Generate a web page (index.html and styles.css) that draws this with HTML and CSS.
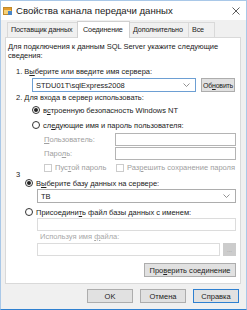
FILE: index.html
```html
<!DOCTYPE html>
<html lang="ru">
    <head>
        <meta charset="UTF-8" />
        <title>Свойства канала передачи данных</title>
        <link rel="stylesheet" href="styles.css">
    </head>
    <body>
        <div class="window">
            <div class="titlebar">
                <svg class="app_icon" width="10" height="10" viewBox="0 0 10 10">
                    <rect x="0.5" y="1.5" width="8" height="7" fill="#f6d27a" stroke="#c08a2a" />
                    <rect x="1" y="2" width="7" height="2" fill="#e49b2c" />
                    <rect x="5" y="5" width="4" height="4" fill="#4a86c8" />
                </svg>
                <span class="title">Свойства канала передачи данных</span>
                <svg class="close" width="8" height="8" viewBox="0 0 8 8">
                    <path d="M0.5 0.5 L7.5 7.5 M7.5 0.5 L0.5 7.5" stroke="#333" stroke-width="0.8" />
                </svg>
            </div>

            <div class="tabs">
                <div class="tab tab_provider">Поставщик данных</div>
                <div class="tab tab_active">Соединение</div>
                <div class="tab tab_extra">Дополнительно</div>
                <div class="tab tab_all">Все</div>
            </div>

            <div class="panel">
                <p class="intro">Для подключения к данным SQL Server укажите следующие<br>сведения:</p>

                <div class="step step_one">1. В<u>ы</u>берите или введите имя сервера:</div>
                <div class="server_row">
                    <div class="combo combo_focus">
                        <span>STDU01T\sqlExpress2008</span>
                        <svg class="chevron" width="7" height="4" viewBox="0 0 7 4">
                            <path d="M0.5 0.5 L3.5 3.5 L6.5 0.5" fill="none" stroke="#777" stroke-width="0.8" />
                        </svg>
                    </div>
                    <div class="btn btn_refresh"><span>Об<u>н</u>овить</span></div>
                </div>

                <div class="step step_two">2. Для входа в сервер использовать:</div>
                <div class="radio_row radio_first">
                    <span class="radio radio_on"></span>
                    <span>в<u>с</u>троенную безопасность Windows NT</span>
                </div>
                <div class="radio_row radio_second">
                    <span class="radio"></span>
                    <span>сл<u>е</u>дующие имя и пароль пользователя:</span>
                </div>

                <div class="field_row field_user">
                    <span class="field_label"><u>П</u>ользователь:</span>
                    <div class="input"></div>
                </div>
                <div class="field_row field_pass">
                    <span class="field_label">Паро<u>л</u>ь:</span>
                    <div class="input"></div>
                </div>
                <div class="check_row">
                    <span class="check_item check_blank">
                        <span class="checkbox"></span>
                        <span>Пус<u>т</u>ой пароль</span>
                    </span>
                    <span class="check_item">
                        <span class="checkbox"></span>
                        <span>Раз<u>р</u>ешить сохранение пароля</span>
                    </span>
                </div>

                <div class="step step_three">3</div>
                <div class="radio_row radio_db">
                    <span class="radio radio_on"></span>
                    <span>В<u>ы</u>берите базу данных на сервере:</span>
                </div>
                <div class="combo combo_db">
                    <span>TB</span>
                    <svg class="chevron" width="7" height="4" viewBox="0 0 7 4">
                        <path d="M0.5 0.5 L3.5 3.5 L6.5 0.5" fill="none" stroke="#777" stroke-width="0.8" />
                    </svg>
                </div>
                <div class="radio_row radio_file">
                    <span class="radio"></span>
                    <span>Присоедини<u>т</u>ь файл базы данных с именем:</span>
                </div>
                <div class="input input_off input_attach"></div>
                <div class="file_label">Используя имя <u>ф</u>айла:</div>
                <div class="file_row">
                    <div class="input input_off"></div>
                    <div class="browse">...</div>
                </div>

                <div class="test_row">
                    <div class="btn btn_test"><span>Про<u>в</u>ерить соединение</span></div>
                </div>
            </div>

            <div class="buttons">
                <div class="btn btn_dialog">OK</div>
                <div class="btn btn_dialog">Отмена</div>
                <div class="btn btn_dialog btn_default">Справка</div>
            </div>
        </div>
    </body>
</html>
```

FILE: styles.css
```css
body {
    margin: 0;
    font-family: "Liberation Sans", Arial, sans-serif;
    font-size: 7.5px;
    color: #222222;
}

u {
    text-decoration-thickness: 1px;
    text-underline-offset: 1px;
}

.window {
    width: 247px;
    height: 310px;
    box-sizing: border-box;
    background-color: #f0f0f0;
    border: 1px solid #a9c8e8;
    border-bottom-color: #2f80d0;
    display: flex;
    flex-direction: column;
}

/* title bar */
.titlebar {
    height: 19px;
    background-color: #ffffff;
    display: flex;
    align-items: center;
    padding-left: 2px;
}

.app_icon {
    flex: none;
}

.title {
    margin-left: 3px;
    font-size: 9.6px;
    color: #1a1a1a;
    flex: 1;
}

.close {
    margin-right: 6px;
}

/* tabs */
.tabs {
    height: 17px;
    display: flex;
    align-items: flex-end;
    padding-left: 6px;
    font-size: 7.2px;
    letter-spacing: -0.15px;
}

.tab {
    height: 15px;
    box-sizing: border-box;
    border: 1px solid #d9d9d9;
    border-bottom: none;
    background-color: #f0f0f0;
    padding-left: 3px;
    line-height: 14px;
    white-space: nowrap;
    overflow: hidden;
}

.tab_provider {
    width: 71px;
}

.tab_active {
    width: 53px;
    height: 17px;
    margin-left: -1px;
    margin-right: -1px;
    margin-bottom: -1px;
    background-color: #ffffff;
    border-color: #d0d0d0;
    line-height: 15px;
    padding-left: 5px;
    position: relative;
    z-index: 1;
}

.tab_extra {
    width: 60px;
}

.tab_all {
    width: 26px;
    border-left: none;
}

/* panel */
.panel {
    height: 247px;
    box-sizing: border-box;
    margin: 0 5px 0 4px;
    border: 1px solid #d9d9d9;
    background-color: #ffffff;
    padding: 0 4px 0 2px;
}

.intro {
    margin: 4px 0 0;
    line-height: 9px;
}

.step {
    line-height: 9px;
    padding-left: 8px;
}

.step_one {
    margin-top: 7px;
}

.step_two {
    margin-top: 1px;
}

.step_three {
    height: 6px;
    line-height: 6px;
}

.server_row {
    margin-top: 2px;
    height: 14px;
    display: flex;
    padding-left: 24px;
    gap: 5px;
}

.combo {
    height: 14px;
    box-sizing: border-box;
    border: 1px solid #adadad;
    display: flex;
    align-items: center;
    justify-content: space-between;
    padding: 0 5px 0 3px;
    background-color: #ffffff;
}

.combo_focus {
    width: 164px;
    border-color: #6d9fd3;
}

.combo_db {
    margin: 1px 0 0 29px;
}

.btn {
    height: 14px;
    box-sizing: border-box;
    border: 1px solid #adadad;
    background-color: #e1e1e1;
    display: flex;
    align-items: center;
    justify-content: center;
    white-space: nowrap;
}

.btn_refresh {
    width: 34px;
    font-size: 7px;
    letter-spacing: -0.2px;
}

.radio_row {
    height: 10px;
    display: flex;
    align-items: center;
    gap: 3px;
    padding-left: 24px;
}

.radio_first {
    margin-top: 3px;
}

.radio_second {
    margin-top: 5px;
}

.radio_db {
    padding-left: 17px;
}

.radio_file {
    margin-top: 4px;
    padding-left: 17px;
}

.radio {
    width: 8px;
    height: 8px;
    box-sizing: border-box;
    border: 1px solid #333333;
    border-radius: 50%;
    background-color: #ffffff;
    display: flex;
    align-items: center;
    justify-content: center;
    flex: none;
}

.radio_on::after {
    content: "";
    width: 4px;
    height: 4px;
    border-radius: 50%;
    background-color: #222222;
}

.field_row {
    height: 13px;
    display: flex;
    align-items: center;
    padding-left: 36px;
    color: #a0a0a0;
}

.field_user {
    margin-top: 3px;
}

.field_pass {
    margin-top: 1px;
}

.field_label {
    width: 71px;
    flex: none;
}

.input {
    flex: 1;
    height: 13px;
    box-sizing: border-box;
    border: 1px solid #b4b4b4;
    background-color: #ffffff;
}

.input_off {
    border-color: #dcdcdc;
}

.input_attach {
    margin: 1px 0 0 29px;
}

.check_row {
    margin-top: 3px;
    height: 9px;
    display: flex;
    align-items: center;
    padding-left: 36px;
    color: #a0a0a0;
}

.check_item {
    display: flex;
    align-items: center;
    gap: 3px;
    white-space: nowrap;
}

.check_blank {
    width: 72px;
}

.checkbox {
    width: 8px;
    height: 8px;
    box-sizing: border-box;
    border: 1px solid #cccccc;
    flex: none;
}

.file_label {
    margin: 1px 0 0 32px;
    line-height: 9px;
    color: #a8a8a8;
}

.file_row {
    margin: 2px 0 0 29px;
    height: 13px;
    display: flex;
    gap: 3px;
}

.browse {
    width: 13px;
    background-color: #cccccc;
    color: #999999;
    font-size: 6px;
    display: flex;
    align-items: center;
    justify-content: center;
}

.test_row {
    margin-top: 7px;
    display: flex;
    justify-content: flex-end;
}

.btn_test {
    width: 92px;
}

/* dialog buttons */
.buttons {
    margin-top: 5px;
    display: flex;
    justify-content: flex-end;
    gap: 7px;
    padding-right: 7px;
}

.btn_dialog {
    width: 46px;
}

.btn_default {
    border-color: #2f80d0;
}
```
